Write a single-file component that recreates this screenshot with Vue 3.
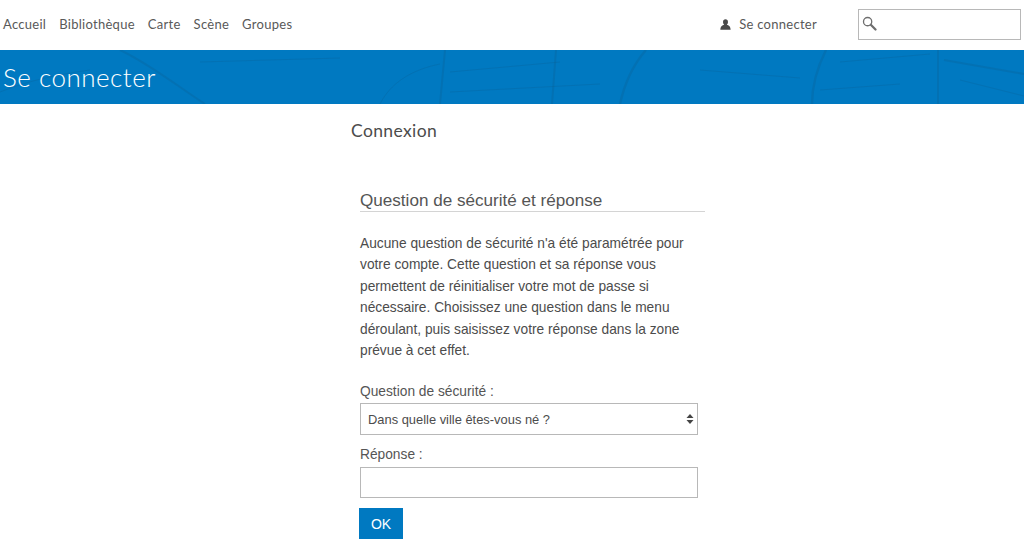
<template>
  <div class="page">
    <header class="top">
      <nav class="nav">
        <a v-for="item in navItems" :key="item">{{ item }}</a>
      </nav>
      <div class="right">
        <a class="signin">
          <svg class="user" width="11" height="11" viewBox="0 0 12 12" aria-hidden="true">
            <path d="M6 0.3 C7.7 0.3 8.7 1.6 8.7 3.2 C8.7 4.6 8 5.6 7.4 6.2 C9.6 6.8 11.6 8 11.6 11.7 L0.4 11.7 C0.4 8 2.4 6.8 4.6 6.2 C4 5.6 3.3 4.6 3.3 3.2 C3.3 1.6 4.3 0.3 6 0.3 Z" fill="#4a4a4a" />
          </svg>
          <span>Se connecter</span>
        </a>
        <div class="search">
          <svg width="15" height="15" viewBox="0 0 16 16" aria-hidden="true">
            <circle cx="6" cy="6" r="4.4" fill="none" stroke="#6e6e6e" stroke-width="1.4" />
            <path d="M9.4 9.4 L14.4 14.4" stroke="#6e6e6e" stroke-width="2.4" stroke-linecap="round" />
          </svg>
        </div>
      </div>
    </header>

    <section class="banner">
      <svg class="map" width="1024" height="54" viewBox="0 0 1024 54" aria-hidden="true">
        <g fill="none" stroke="#0a5f96" stroke-opacity="0.3">
          <path d="M120 0 C150 14 180 38 205 54" stroke-width="2" />
          <path d="M0 42 C30 30 60 24 90 20" stroke-width="1" />
          <path d="M445 0 L440 54" stroke-width="2" />
          <path d="M556 0 L552 54" stroke-width="2" />
          <path d="M646 0 C632 16 624 36 620 54" stroke-width="2.4" />
          <path d="M826 0 C818 16 812 36 812 54" stroke-width="2.4" />
          <path d="M944 10 L1024 24" stroke-width="2" />
          <path d="M938 0 L938 54" stroke-width="2" />
          <path d="M840 12 L930 4 M820 40 L900 34 M450 22 L560 12 M450 42 L600 34" stroke-width="1" />
          <path d="M200 12 L340 8 M380 54 C390 34 410 20 440 14" stroke-width="1" />
          <path d="M960 30 L1024 46 M700 20 L800 28" stroke-width="1" />
        </g>
      </svg>
      <h1>Se connecter</h1>
    </section>

    <main class="content">
      <h2 class="connexion">Connexion</h2>
      <form class="form" @submit.prevent>
        <h3>Question de sécurité et réponse</h3>
        <p>Aucune question de sécurité n'a été paramétrée pour votre compte. Cette question et sa réponse vous permettent de réinitialiser votre mot de passe si nécessaire. Choisissez une question dans le menu déroulant, puis saisissez votre réponse dans la zone prévue à cet effet.</p>
        <label class="first">Question de sécurité :</label>
        <div class="select">
          <span>Dans quelle ville êtes-vous né ?</span>
          <svg width="8" height="12" viewBox="0 0 8 12" aria-hidden="true">
            <path d="M4 1 L7.5 5 L0.5 5 Z M0.5 7 L7.5 7 L4 11 Z" fill="#444" />
          </svg>
        </div>
        <label class="second">Réponse :</label>
        <input class="answer" type="text" />
        <button type="submit">OK</button>
      </form>
    </main>
  </div>
</template>

<script setup>
const navItems = ['Accueil', 'Bibliothèque', 'Carte', 'Scène', 'Groupes']
</script>

<style>
html, body { margin: 0; background: #fff; overflow: hidden; }
</style>

<style scoped>
.page {
  width: 1024px;
  height: 552px;
  overflow: hidden;
  font-family: "Liberation Sans", Arial, sans-serif;
  color: #4c4c4c;
}
.top {
  height: 50px;
  display: flex;
  align-items: center;
  justify-content: space-between;
  padding-left: 3px;
  padding-bottom: 2px;
  box-sizing: border-box;
}
.nav {
  display: flex;
  gap: 13px;
  font-family: Lato, sans-serif;
  font-size: 13px;
  letter-spacing: 0.28px;
  color: #595959;
}
.right {
  display: flex;
  align-items: center;
  padding-right: 3px;
}
.signin {
  display: flex;
  align-items: center;
  gap: 8px;
  font-family: Lato, sans-serif;
  font-size: 13px;
  letter-spacing: 0.28px;
  color: #595959;
  margin-right: 41px;
}
.search {
  width: 163px;
  height: 31px;
  box-sizing: border-box;
  border: 1px solid #b8b8b8;
  display: flex;
  align-items: center;
  padding-left: 3px;
  padding-bottom: 2px;
}
.banner {
  position: relative;
  height: 54px;
  background: #0079c1;
  overflow: hidden;
}
.map {
  position: absolute;
  inset: 0;
  filter: blur(0.7px);
}
h1 {
  position: relative;
  margin: 0;
  padding-left: 3px;
  font-family: Lato, sans-serif;
  font-weight: 300;
  font-size: 26px;
  line-height: 54px;
  letter-spacing: 0.5px;
  color: #fff;
}
.content {
  width: 354px;
  margin-left: 351px;
}
.connexion {
  margin: 0;
  padding-top: 17px;
  font-family: Lato, sans-serif;
  font-weight: 400;
  font-size: 17.5px;
  line-height: 20px;
  letter-spacing: 0.38px;
  color: #4c4c4c;
}
.form {
  margin-left: 9px;
  padding-top: 50px;
}
h3 {
  margin: 0;
  width: 345px;
  font-size: 17.1px;
  font-weight: 400;
  line-height: 19px;
  padding-bottom: 1px;
  border-bottom: 1px solid #d4d4d4;
  color: #555;
}
p {
  margin: 0;
  padding-top: 21px;
  width: 340px;
  font-size: 13.75px;
  line-height: 21.4px;
  color: #4c4c4c;
}
label {
  display: block;
  font-size: 13.75px;
  line-height: 18px;
  color: #555;
}
.first { margin-top: 22px; }
.second { margin-top: 11px; }
.select {
  width: 338px;
  height: 32px;
  margin-top: 2px;
  box-sizing: border-box;
  border: 1px solid #b8b8b8;
  display: flex;
  align-items: center;
  justify-content: space-between;
  padding: 0 3px 0 7px;
  font-size: 12.9px;
  color: #4c4c4c;
}
.answer {
  display: block;
  width: 338px;
  height: 31px;
  margin-top: 3px;
  box-sizing: border-box;
  border: 1px solid #b8b8b8;
  background: #fff;
  padding: 0;
  outline: none;
}
button {
  display: block;
  width: 44px;
  height: 31px;
  margin: 10px 0 0 -1px;
  border: 0;
  padding: 0;
  background: #0079c1;
  color: #fff;
  font-family: "Liberation Sans", Arial, sans-serif;
  font-size: 14px;
}
</style>
